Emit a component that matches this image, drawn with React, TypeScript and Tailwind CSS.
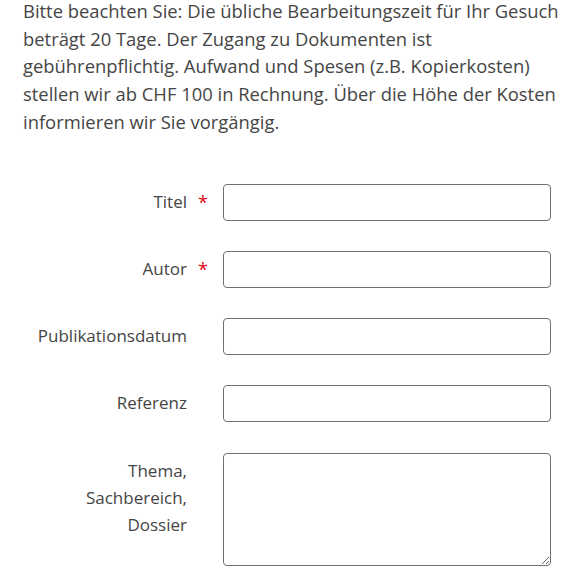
import React from "react";

const rows = [
  { label: "Titel", required: true },
  { label: "Autor", required: true },
  { label: "Publikationsdatum", required: false },
  { label: "Referenz", required: false },
];

export default function App() {
  return (
    <div className="w-[588px] h-[577px] overflow-hidden bg-white text-[#454545] font-['Open_Sans',sans-serif]">
      <p className="mt-[-3px] pl-[23px] text-[18.4px] leading-[27.7px]">
        Bitte beachten Sie: Die übliche Bearbeitungszeit für Ihr Gesuch
        <br />
        beträgt 20 Tage. Der Zugang zu Dokumenten ist
        <br />
        gebührenpflichtig. Aufwand und Spesen (z.B. Kopierkosten)
        <br />
        stellen wir ab CHF 100 in Rechnung. Über die Höhe der Kosten
        <br />
        informieren wir Sie vorgängig.
      </p>

      <form className="mt-[48px] pl-[23px] grid grid-cols-[164px_36px_328px] gap-y-[30px]">
        {rows.map((r) => (
          <React.Fragment key={r.label}>
            <label className="flex items-center justify-end text-[17px] overflow-hidden whitespace-nowrap">
              {r.label}
            </label>
            <div className="flex items-center pl-[11px] text-[#e30613] text-[18px]">
              {r.required ? "*" : ""}
            </div>
            <input
              type="text"
              className="h-[37px] w-full rounded-[4px] border border-[#707070] bg-white"
            />
          </React.Fragment>
        ))}
        <label className="pt-[5px] text-right text-[17px] leading-[27px]">
          Thema,
          <br />
          Sachbereich,
          <br />
          Dossier
        </label>
        <div />
        <textarea className="mt-[1px] h-[113px] w-full rounded-[4px] border border-[#707070] bg-white" />
      </form>
    </div>
  );
}
